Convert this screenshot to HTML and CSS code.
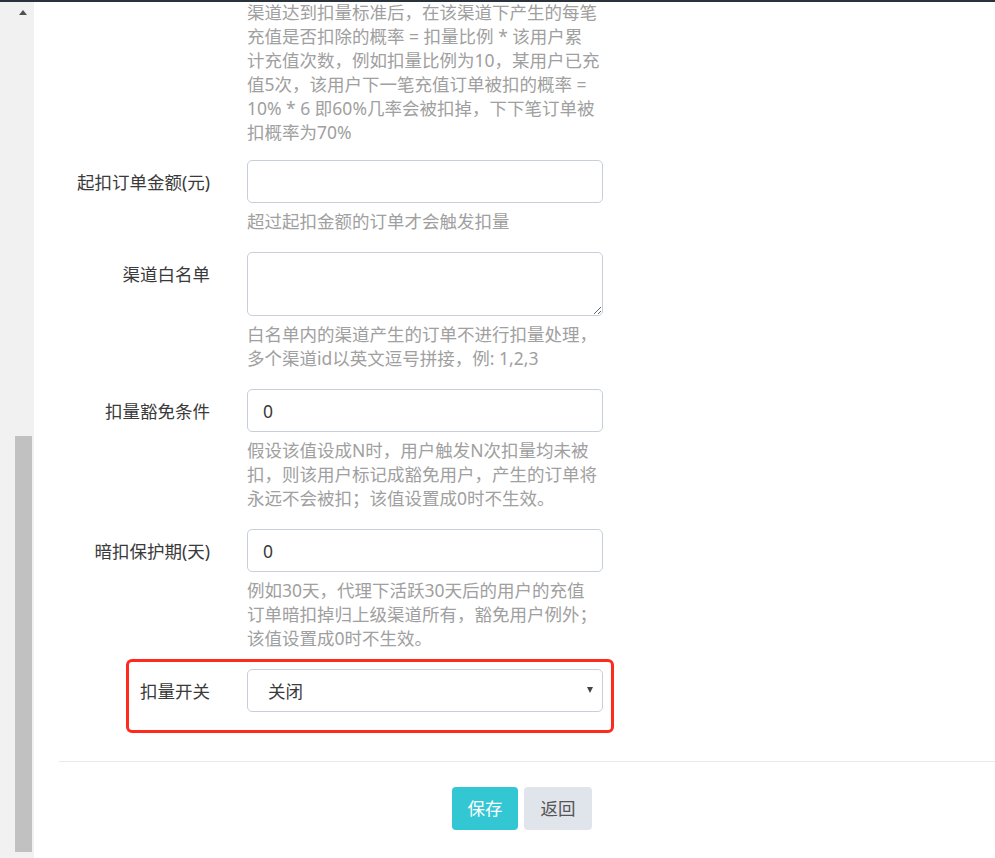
FILE: index.html
```html
<!DOCTYPE html>
<html lang="zh-CN">
<head>
<meta charset="utf-8">
<title>扣量设置</title>
<link rel="stylesheet" href="styles.css">
</head>
<body>
<div class="topline"></div>
<div class="app">
  <aside class="scrollpanel">
    <span class="arrow-up"></span>
    <span class="thumb"></span>
  </aside>
  <main class="main">
    <form class="form">
      <div class="row row-first">
        <div class="label"></div>
        <div class="field">
          <div class="help">渠道达到扣量标准后，在该渠道下产生的每笔<br>充值是否扣除的概率 = 扣量比例 * 该用户累<br>计充值次数，例如扣量比例为10，某用户已充<br>值5次，该用户下一笔充值订单被扣的概率 =<br>10% * 6 即60%几率会被扣掉，下下笔订单被<br>扣概率为70%</div>
        </div>
      </div>
      <div class="row">
        <label class="label">起扣订单金额(元)</label>
        <div class="field">
          <input class="control" type="text" value="">
          <div class="help">超过起扣金额的订单才会触发扣量</div>
        </div>
      </div>
      <div class="row">
        <label class="label">渠道白名单</label>
        <div class="field">
          <textarea class="control area"></textarea>
          <div class="help">白名单内的渠道产生的订单不进行扣量处理，<br>多个渠道id以英文逗号拼接，例: 1,2,3</div>
        </div>
      </div>
      <div class="row">
        <label class="label">扣量豁免条件</label>
        <div class="field">
          <input class="control" type="text" value="0">
          <div class="help">假设该值设成N时，用户触发N次扣量均未被<br>扣，则该用户标记成豁免用户，产生的订单将<br>永远不会被扣；该值设置成0时不生效。</div>
        </div>
      </div>
      <div class="row">
        <label class="label">暗扣保护期(天)</label>
        <div class="field">
          <input class="control" type="text" value="0">
          <div class="help">例如30天，代理下活跃30天后的用户的充值<br>订单暗扣掉归上级渠道所有，豁免用户例外；<br>该值设置成0时不生效。</div>
        </div>
      </div>
      <div class="row row-marked">
        <label class="label">扣量开关</label>
        <div class="field">
          <div class="select-wrap">
            <select class="control select">
              <option>关闭</option>
              <option>开启</option>
            </select>
          </div>
        </div>
        <span class="redbox"></span>
      </div>
      <div class="divider"></div>
      <div class="actions">
        <button type="button" class="btn btn-save">保存</button>
        <button type="button" class="btn btn-back">返回</button>
      </div>
    </form>
  </main>
</div>
</body>
</html>
```

FILE: styles.css
```css
html, body {
  margin: 0;
  padding: 0;
  height: 858px;
  overflow: hidden;
  background: #ffffff;
}

body {
  font-family: "Noto Sans", "Noto Sans CJK SC", sans-serif;
  font-size: 17.5px;
  color: #333333;
}

.topline {
  position: fixed;
  top: 0;
  left: 0;
  right: 0;
  height: 2px;
  background: #2a333c;
  z-index: 5;
}

.app {
  display: flex;
  height: 858px;
}

.scrollpanel {
  width: 34px;
  flex: 0 0 34px;
  box-sizing: border-box;
  background: #f1f1f1;
  display: flex;
  flex-direction: column;
  padding-left: 15px;
  padding-right: 2px;
}

.arrow-up {
  display: block;
  width: 0;
  height: 0;
  margin-top: 10px;
  margin-left: 4px;
  border-left: 4.5px solid transparent;
  border-right: 4.5px solid transparent;
  border-bottom: 5px solid #505050;
}

.thumb {
  display: block;
  width: 17px;
  height: 416px;
  margin-top: auto;
  margin-bottom: 6px;
  background: #c1c1c1;
}

.main {
  flex: 1;
  min-width: 0;
}

.form {
  padding-left: 25px;
  margin: 0;
}

.row {
  display: grid;
  grid-template-columns: 170px 356px;
  column-gap: 18px;
  margin-bottom: 19px;
}

.row-first {
  margin-bottom: 16px;
}

.label {
  text-align: right;
  padding-right: 19px;
  padding-top: 10px;
  line-height: 24px;
  color: #3a3a3a;
  white-space: nowrap;
}

.field {
  display: flex;
  flex-direction: column;
}

.help {
  margin-top: 6px;
  line-height: 24px;
  color: #a0a0a0;
  white-space: nowrap;
}

.row-first .help {
  margin-top: 0;
}

.control {
  box-sizing: border-box;
  width: 356px;
  height: 43px;
  margin: 0;
  padding: 0 15px;
  border: 1px solid #c8cfda;
  border-radius: 5px;
  background: #ffffff;
  font-family: "Noto Sans", "Noto Sans CJK SC", sans-serif;
  font-size: 17.5px;
  color: #3a3a3a;
  outline: none;
}

.area {
  height: 64px;
  padding: 8px 15px;
  resize: vertical;
  display: block;
}

.select-wrap {
  position: relative;
  width: 356px;
}

.select {
  -webkit-appearance: none;
  appearance: none;
  padding-left: 20px;
  display: block;
}

.select-wrap::after {
  content: "";
  position: absolute;
  right: 10px;
  top: 18px;
  width: 0;
  height: 0;
  border-left: 3.5px solid transparent;
  border-right: 3.5px solid transparent;
  border-top: 6px solid #444444;
  pointer-events: none;
}

.row-marked {
  position: relative;
  margin-bottom: 0;
}

.redbox {
  position: absolute;
  top: -10px;
  left: 67px;
  width: 488px;
  bottom: -21px;
  box-sizing: border-box;
  border: 3px solid #ff2a1c;
  border-radius: 6px;
  pointer-events: none;
}

.divider {
  height: 1px;
  background: #e7eaec;
  margin-top: 49px;
}

.actions {
  display: flex;
  gap: 6px;
  margin-top: 25px;
  padding-left: 393px;
}

.btn {
  height: 43px;
  border: none;
  border-radius: 4px;
  font-family: "Noto Sans", "Noto Sans CJK SC", sans-serif;
  font-size: 17.5px;
  line-height: 43px;
  padding: 0 15px;
  cursor: pointer;
}

.btn-save {
  background: #33c6d3;
  color: #ffffff;
  width: 66px;
}

.btn-back {
  background: #e0e4eb;
  color: #555555;
  width: 68px;
}
```
